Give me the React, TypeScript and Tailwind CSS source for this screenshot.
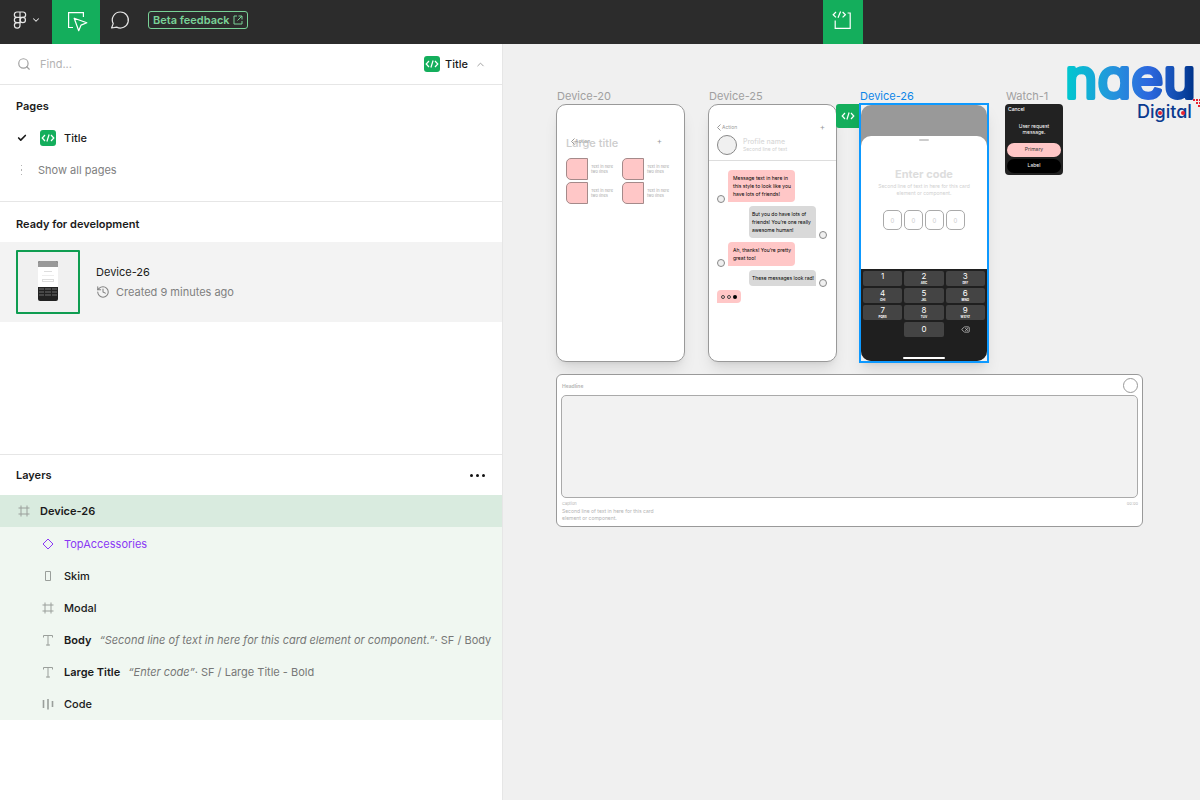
import React from 'react';
import { Check, ChevronDown, ChevronUp, Delete, History, Search } from 'lucide-react';

type LayerKind = 'frame' | 'component' | 'rect' | 'text' | 'stack';

interface Layer {
  name: string;
  kind: LayerKind;
  quote?: string;
  style?: string;
}

const layers: Layer[] = [
  { name: 'TopAccessories', kind: 'component' },
  { name: 'Skim', kind: 'rect' },
  { name: 'Modal', kind: 'frame' },
  {
    name: 'Body',
    kind: 'text',
    quote: '“Second line of text in here for this card element or component.”',
    style: '· SF / Body',
  },
  { name: 'Large Title', kind: 'text', quote: '“Enter code”', style: '· SF / Large Title - Bold' },
  { name: 'Code', kind: 'stack' },
];

const keys = [
  ['1', ''],
  ['2', 'ABC'],
  ['3', 'DEF'],
  ['4', 'GHI'],
  ['5', 'JKL'],
  ['6', 'MNO'],
  ['7', 'PQRS'],
  ['8', 'TUV'],
  ['9', 'WXYZ'],
];

const FigmaLogo = () => (
  <svg width="14" height="18" viewBox="0 0 14 18" fill="none" stroke="#e6e6e6" strokeWidth="1.2">
    <path d="M7 1H4a2.65 2.65 0 0 0 0 5.3h3zM7 1h3a2.65 2.65 0 0 1 0 5.3H7zM7 6.3H4a2.65 2.65 0 0 0 0 5.3h3z" />
    <circle cx="9.8" cy="8.95" r="2.65" />
    <path d="M4 11.6h3v2.7A2.8 2.8 0 1 1 4 11.6z" />
  </svg>
);

const InspectIcon = () => (
  <svg width="22" height="22" viewBox="0 0 22 22" fill="none" stroke="white" strokeWidth="1.2">
    <path d="M6 16.5H1.6V1.6h14.8V6" />
    <path d="M7.2 7.2l12.6 4.6-5.7 2.3-2.4 5.6z" strokeLinejoin="round" />
  </svg>
);

const CommentIcon = () => (
  <svg width="20" height="20" viewBox="0 0 20 20" fill="none" stroke="#e6e6e6" strokeWidth="1.2" strokeLinejoin="round">
    <path d="M10.4 2a8 8 0 1 1-3.7 15.1L1.600 18l1.600-4.4A8 8 0 0 1 10.4 2z" />
  </svg>
);

const DevModeIcon = () => (
  <svg width="20" height="20" viewBox="0 0 20 20" fill="none" stroke="white" strokeWidth="1.2">
    <path d="M4 2L1.2 4.7 4 7.4M10.6 2l2.8 2.7-2.8 2.7M8.6 1.6L6 7.8" />
    <path d="M15.6 3h2.6v15.4H3.2v-8" />
  </svg>
);

const ExternalIcon = () => (
  <svg width="10" height="10" viewBox="0 0 10 10" fill="none" stroke="currentColor">
    <path d="M4 1H1v8h8V6M5.500 1H9v3.500M9 1L4.500 5.500" />
  </svg>
);

const CodeIcon = () => (
  <svg width="14" height="10" viewBox="0 0 14 10" fill="none" stroke="currentColor" strokeWidth="1.2">
    <path d="M4 2L1.2 5 4 8M10 2l2.800 3L10 8M8.100 1.500L5.900 8.500" />
  </svg>
);

const LayerIcon = ({ kind }: { kind: LayerKind }) => {
  const color = kind === 'component' ? '#8a38f5' : '#9a9f9b';
  return (
    <svg width="12" height="12" viewBox="0 0 12 12" fill="none" stroke={color} className="shrink-0">
      {kind === 'frame' && <path d="M3 .5v11M9 .5v11M.5 3h11M.5 9h11" />}
      {kind === 'component' && <path d="M6 1l5 5-5 5-5-5z" />}
      {kind === 'rect' && <path d="M3.5 1.5h5v9h-5z" />}
      {kind === 'text' && <path d="M1.5 3.5v-2h9v2M6 1.5v10M4 11h4" />}
      {kind === 'stack' && <path d="M1.5 2v8M6 1v10.500M10.500 3v6" strokeWidth="1.6" />}
    </svg>
  );
};

const CodeBadge = () => (
  <span className="flex h-4 w-4 items-center justify-center rounded-[3px] bg-[#14ae5c] text-white">
    <CodeIcon />
  </span>
);

const Toolbar = () => (
  <header className="flex h-11 shrink-0 items-center bg-[#2c2c2c]">
    <button className="flex h-11 w-[52px] items-center gap-1 pb-1 pl-[13px] text-[#e6e6e6]" aria-label="Main menu">
      <FigmaLogo />
      <ChevronDown className="h-[10px] w-[10px]" strokeWidth={2.5} />
    </button>
    <button className="flex h-11 w-12 items-center justify-center bg-[#14ae5c] pl-[3px]" aria-label="Inspect">
      <InspectIcon />
    </button>
    <button className="flex h-11 w-10 items-center justify-center pb-1" aria-label="Comment">
      <CommentIcon />
    </button>
    <a
      href="#feedback"
      className="mb-1 ml-2 flex h-[18px] items-center gap-[3px] rounded-[3px] border border-[#79d297] px-1 text-[11px] font-semibold text-[#79d297]"
    >
      Beta feedback
      <ExternalIcon />
    </a>
    <button
      className="mr-[337px] ml-auto flex h-11 w-10 items-center justify-center bg-[#14ae5c] pr-[2px] pb-1"
      aria-label="Dev Mode"
    >
      <DevModeIcon />
    </button>
  </header>
);

const MiniDevice = () => (
  <span className="flex h-10 w-5 flex-col overflow-hidden rounded-[2px] bg-[#222]">
    <span className="h-[6px] bg-[#999]" />
    <span className="flex h-5 flex-col items-center gap-[3px] bg-white pt-[4px]">
      <span className="h-px w-2 bg-[#ddd]" />
      <span className="h-px w-3 bg-[#eee]" />
      <span className="h-[3px] w-3 border border-[#ddd]" />
    </span>
    <span className="grid grid-cols-3 gap-px p-px">
      {keys.map(([digit]) => (
        <span key={digit} className="h-[2px] bg-[#484848]" />
      ))}
    </span>
  </span>
);

const Sidebar = () => (
  <aside className="flex w-[503px] shrink-0 flex-col border-r border-[#e6e6e6] bg-white text-[#1a1a1a]">
    <div className="flex h-[41px] shrink-0 items-center border-b border-[#e6e6e6] pr-4 pl-[17px]">
      <Search className="h-[14px] w-[14px] text-[#a0a0a0]" strokeWidth={2} />
      <input
        type="text"
        aria-label="Find"
        placeholder="Find..."
        className="ml-[9px] min-w-0 flex-1 outline-none placeholder:text-[#b3b3b3]"
      />
      <button className="flex items-center font-medium">
        <CodeBadge />
        <span className="ml-[5px]">Title</span>
        <ChevronUp className="ml-[7px] h-[11px] w-[11px] text-[#999]" strokeWidth={2} />
      </button>
    </div>

    <section className="shrink-0 border-b border-[#e6e6e6] pt-[5px] pb-[15px]">
      <h2 className="flex h-8 items-center pl-4 font-semibold">Pages</h2>
      <button className="flex h-8 w-full items-center pl-[17px] font-medium">
        <Check className="h-[10px] w-[10px]" strokeWidth={4} />
        <span className="mr-2 ml-[13px]">
          <CodeBadge />
        </span>
        Title
      </button>
      <button className="flex h-8 w-full items-center gap-[15px] pl-5 text-[#808080]">
        <svg width="3" height="12" viewBox="0 0 3 12" fill="#b3b3b3">
          <path d="M1 1h1v1H1zM1 5h1v2H1zM1 10h1v1H1z" />
        </svg>
        Show all pages
      </button>
    </section>

    <section className="h-[253px] shrink-0 border-b border-[#e6e6e6] pt-[6px]">
      <h2 className="flex h-[34px] items-center pb-[2px] pl-4 font-semibold">Ready for development</h2>
      <button className="flex h-20 w-full items-center bg-[#f3f3f3] pl-4 text-left">
        <span className="flex h-16 w-16 items-center justify-center rounded-[1px] border-2 border-[#0f9d51] bg-[#f0f0f0] pb-[2px]">
          <MiniDevice />
        </span>
        <span className="ml-4 flex flex-col">
          <span className="h-5 leading-5">Device-26</span>
          <span className="flex h-5 items-center gap-[6px] text-[#808080]">
            <History className="h-[14px] w-[14px]" strokeWidth={1.75} />
            Created 9 minutes ago
          </span>
        </span>
      </button>
    </section>

    <section>
      <div className="flex h-10 items-center justify-between pr-[17px] pl-4">
        <h2 className="font-semibold">Layers</h2>
        <button aria-label="More">
          <svg width="15" height="3" viewBox="0 0 15 3" fill="#111">
            <circle cx="1.5" cy="1.5" r="1.500" />
            <circle cx="7.5" cy="1.5" r="1.500" />
            <circle cx="13.5" cy="1.5" r="1.500" />
          </svg>
        </button>
      </div>
      <button className="flex h-8 w-full items-center gap-[10px] bg-[#d9ebdf] pl-[18px] font-semibold">
        <LayerIcon kind="frame" />
        Device-26
      </button>
      <ul className="bg-[#f0f7f1] pt-px">
        {layers.map((layer) => (
          <li key={layer.name}>
            <button
              className={`flex h-8 w-full items-center pl-[42px] whitespace-nowrap ${
                layer.kind === 'component' ? 'text-[#8a38f5]' : ''
              }`}
            >
              <LayerIcon kind={layer.kind} />
              <span className={`ml-[10px] ${layer.quote ? 'font-semibold' : layer.kind === 'component' ? '' : 'font-medium'}`}>
                {layer.name}
              </span>
              {layer.quote && (
                <span className="ml-2 text-[#777]">
                  <em>{layer.quote}</em>
                  {layer.style}
                </span>
              )}
            </button>
          </li>
        ))}
      </ul>
    </section>
  </aside>
);

const Tile = () => (
  <div className="flex items-center gap-[3px]">
    <span className="h-[22px] w-[22px] shrink-0 rounded-l-[5px] border border-[#a58a8a] bg-[#ffc7c7]" />
    <span className="text-[4px] leading-[5px] whitespace-nowrap text-[#a6a6a6]">
      Text in here
      <br />
      two lines
    </span>
  </div>
);

const Device20 = () => (
  <div className="h-[258px] w-[129px] rounded-[10px] border border-[#999] bg-white px-[9px] pt-8 shadow-lg">
    <div className="relative h-[21px]">
      <p className="text-[11px] leading-[13px] font-medium text-[#ccc]">Large title</p>
      <span className="absolute top-0 left-[5px] flex items-center text-[5px] leading-[8px] text-[#999]">
        <svg width="4" height="7" viewBox="0 0 4 7" fill="none" stroke="#999">
          <path d="M3.500.5l-3 3 3 3" />
        </svg>
        Action
      </span>
      <span className="absolute top-0 right-[13px] text-[8px] leading-[8px] text-[#999]">+</span>
    </div>
    <div className="grid w-28 grid-cols-2 gap-y-[2px]">
      <Tile />
      <Tile />
      <Tile />
      <Tile />
    </div>
  </div>
);

const Message = ({ lines, mine = false }: { lines: string[]; mine?: boolean }) => (
  <div className={`flex items-end gap-[3px] ${mine ? 'flex-row-reverse' : ''}`}>
    <span className="h-2 w-2 shrink-0 rounded-full border border-[#888] bg-[#f0f0f0]" />
    <p
      className={`mb-px w-[67px] rounded-[4px] py-[4px] text-[5px] leading-[8px] whitespace-nowrap text-black ${
        mine ? 'rounded-br-none bg-[#d9d9d9] pl-[3px]' : 'rounded-bl-none bg-[#ffc7c7] pl-[5px]'
      }`}
    >
      {lines.map((line) => (
        <span key={line} className="block">
          {line}
        </span>
      ))}
    </p>
  </div>
);

const Device25 = () => (
  <div className="h-[258px] w-[129px] overflow-hidden rounded-[10px] border border-[#999] bg-white shadow-lg">
    <div className="flex h-[56px] flex-col justify-end border-b border-[#ddd] px-[8px] pb-[5px]">
      <div className="flex items-center justify-between pr-[3px] text-[5px] leading-[8px] text-[#999]">
        <span className="flex items-center gap-px">
          <svg width="4" height="7" viewBox="0 0 4 7" fill="none" stroke="#999">
            <path d="M3.500.5l-3 3 3 3" />
          </svg>
          Action
        </span>
        <span className="text-[8px]">+</span>
      </div>
      <div className="mt-[4px] flex items-center gap-[6px]">
        <span className="h-5 w-5 rounded-full border border-[#888] bg-[#f0f0f0]" />
        <span className="flex flex-col">
          <span className="text-[7px] leading-[8px] font-medium text-[#d9d9d9]">Profile name</span>
          <span className="text-[5px] leading-[7px] text-[#d0d0d0]">Second line of text</span>
        </span>
      </div>
    </div>
    <div className="flex flex-col gap-[3px] pt-[9px] pr-[9px] pl-[8px]">
      <Message lines={['Message text in here in', 'this style to look like you', 'have lots of friends!']} />
      <Message mine lines={['But you do have lots of', 'friends! You’re one really', 'awesome human!']} />
      <Message lines={['Ah, thanks! You’re pretty', 'great too!']} />
      <Message mine lines={['These messages look rad!']} />
      <span className="flex h-[13px] w-6 items-center justify-center gap-[2px] rounded-[4px] rounded-bl-none bg-[#ffc7c7]">
        <span className="h-1 w-1 rounded-full border border-[#444]" />
        <span className="h-1 w-1 rounded-full border border-[#444]" />
        <span className="h-1 w-1 rounded-full bg-black" />
      </span>
    </div>
  </div>
);

const Device26 = () => (
  <div className="w-[130px] border-2 border-[#0d99ff] shadow-lg">
    <div className="flex h-[256px] flex-col overflow-hidden rounded-[10px] bg-[#999]">
      <div className="mt-[31px] flex h-[133px] flex-col items-center rounded-t-[10px] bg-white">
        <span className="mt-[3px] h-[2px] w-[10px] rounded-full bg-[#ccc]" />
        <h3 className="mt-[25px] text-[11px] leading-4 font-bold text-[#ddd]">Enter code</h3>
        <p className="mt-px text-center text-[5px] leading-[7px] whitespace-nowrap text-[#d0d0d0]">
          Second line of text in here for this card
          <br />
          element or component.
        </p>
        <div className="mt-[13px] flex gap-[2px]">
          {[1, 2, 3, 4].map((n) => (
            <input
              key={n}
              aria-label={`Digit ${n}`}
              placeholder="0"
              className="h-5 w-[19px] rounded-[5px] border border-[#aaa] text-center text-[6px] outline-none placeholder:text-[#ccc]"
            />
          ))}
        </div>
      </div>
      <div className="flex flex-1 flex-col bg-[#1f1f1f] p-[2px] text-white">
        <div className="grid grid-cols-3 gap-[2px]">
          {keys.map(([digit, letters]) => (
            <button key={digit} className="flex h-[15px] flex-col items-center rounded-[2px] bg-[#444] pt-px">
              <span className="text-[8px] leading-[9px]">{digit}</span>
              <span className="text-[3px] leading-[4px] font-bold">{letters}</span>
            </button>
          ))}
          <span />
          <button className="h-[15px] rounded-[2px] bg-[#444] text-[8px] leading-[15px]">0</button>
          <button className="flex items-center justify-center" aria-label="Delete">
            <Delete className="h-[9px] w-[9px] text-[#ccc]" strokeWidth={2} />
          </button>
        </div>
        <span className="mx-auto mt-auto h-[2px] w-[42px] rounded-full bg-white" />
      </div>
    </div>
  </div>
);

const Watch = () => (
  <div className="flex h-[71px] w-[58px] flex-col gap-[2px] rounded-[4px] bg-[#222] p-[2px] text-[5px] text-white">
    <p className="pl-px leading-[7px] font-medium">Cancel</p>
    <p className="flex-1 pt-2 text-center leading-[6px]">
      User request
      <br />
      message.
    </p>
    <button className="h-[14px] rounded-full bg-[#ffc7c7] text-[#333]">Primary</button>
    <button className="h-[14px] rounded-full bg-black">Label</button>
  </div>
);

const WideCard = () => (
  <div className="flex h-[153px] w-[587px] flex-col rounded-[6px] border border-[#999] bg-white px-[4px] pt-[3px] text-[5px] text-[#b3b3b3]">
    <div className="flex h-[17px] items-center justify-between">
      <h3 className="pl-px font-semibold">Headline</h3>
      <span className="mb-[2px] h-[15px] w-[15px] rounded-full border border-[#999]" />
    </div>
    <div className="h-[103px] rounded-[5px] border border-[#aaa] bg-[#f2f2f2]" />
    <div className="flex justify-between pt-[2px] pl-px text-[4px] leading-[7px]">
      <span>Caption</span>
      <span>00:00</span>
    </div>
    <p className="pt-px pl-px leading-[7px]">
      Second line of text in here for this card
      <br />
      element or component.
    </p>
  </div>
);

const NaeuLogo = () => (
  <svg width="134" height="84" viewBox="0 0 134 84" role="img" aria-label="naeu Digital">
    <defs>
      <linearGradient id="naeu" gradientUnits="userSpaceOnUse" x1="0" y1="0" x2="128" y2="0">
        <stop offset="0" stopColor="#00c8cf" />
        <stop offset="0.35" stopColor="#2496dc" />
        <stop offset="0.65" stopColor="#2d67de" />
        <stop offset="0.85" stopColor="#1450b4" />
        <stop offset="1" stopColor="#00338a" />
      </linearGradient>
    </defs>
    <text
      x="-1"
      y="54"
      fill="url(#naeu)"
      stroke="url(#naeu)"
      strokeWidth="4"
      strokeLinejoin="round"
      className="text-[55px] [font-feature-settings:'cv11']"
    >
      naeu
    </text>
    <text x="71" y="74" fill="#0b3a8f" className="text-[18px] font-medium [font-feature-settings:'cv11']">
      Digital
    </text>
    <g fill="#e8232f">
      <circle cx="94" cy="69" r="2" />
      <circle cx="117" cy="69" r="2" />
      <path d="M127 55h2v2h-2zM130 55h2v2h-2zM133 55h1v2h-1zM130 58h2v2h-2zM133 58h1v2h-1zM132 61h2v2h-2z" />
    </g>
  </svg>
);

const FrameLabel = ({ children, selected = false }: { children: string; selected?: boolean }) => (
  <p className={`h-4 pl-px leading-4 ${selected ? 'text-[#0d86e8]' : 'text-[#a0a0a0]'}`}>{children}</p>
);

const Canvas = () => (
  <main className="relative min-w-0 flex-1 overflow-hidden bg-[#f0f0f0]">
    <div className="absolute top-[44px] left-[53px]">
      <FrameLabel>Device-20</FrameLabel>
      <Device20 />
    </div>
    <div className="absolute top-[44px] left-[205px]">
      <FrameLabel>Device-25</FrameLabel>
      <Device25 />
    </div>
    <div className="absolute top-[60px] left-[333px] flex h-6 w-6 items-center justify-center rounded-l-[3px] bg-[#14ae5c] text-white">
      <CodeIcon />
    </div>
    <div className="absolute top-[44px] left-[356px]">
      <FrameLabel selected>Device-26</FrameLabel>
      <div className="-mt-px">
        <Device26 />
      </div>
    </div>
    <div className="absolute top-[44px] left-[502px]">
      <FrameLabel>Watch-1</FrameLabel>
      <Watch />
    </div>
    <div className="absolute top-[330px] left-[53px]">
      <WideCard />
    </div>
    <div className="absolute top-0 right-0">
      <NaeuLogo />
    </div>
  </main>
);

const App: React.FC = () => {
  return (
    <div className="flex h-screen flex-col font-['Inter',sans-serif] text-[11px]">
      <Toolbar />
      <div className="flex min-h-0 flex-1">
        <Sidebar />
        <Canvas />
      </div>
    </div>
  );
};

export default App;
